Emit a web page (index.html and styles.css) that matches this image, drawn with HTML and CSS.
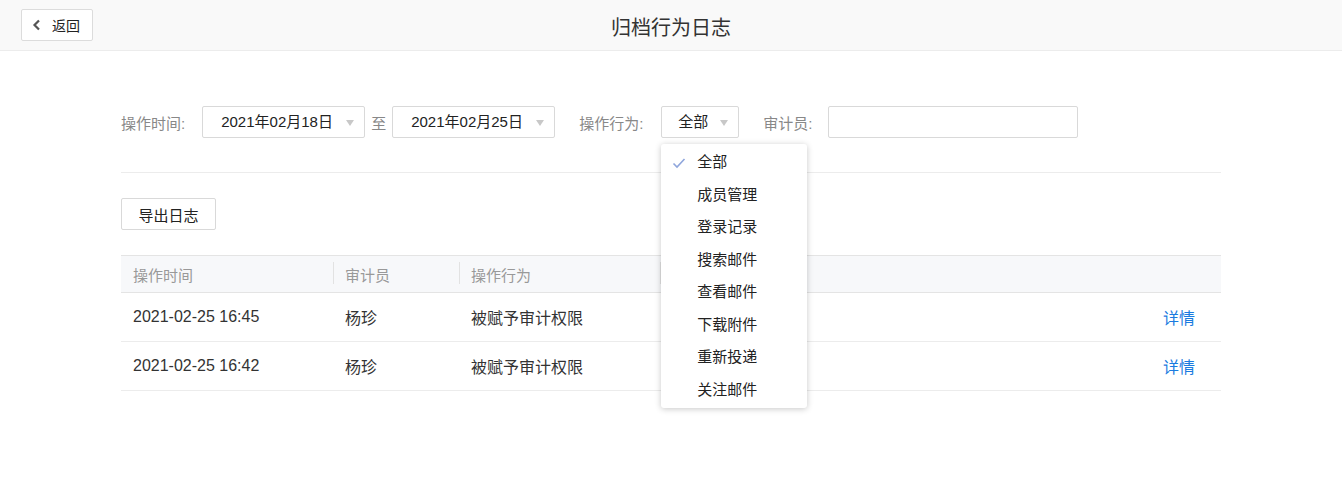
FILE: index.html
```html
<!DOCTYPE html>
<html lang="zh-CN">
<head>
    <meta charset="UTF-8">
    <title>归档行为日志</title>
    <link rel="stylesheet" href="styles.css">
</head>
<body>

<div class="topbar">
    <button class="back-btn">
        <svg width="10" height="12" viewBox="0 0 10 12"><polyline points="7,1.5 2.5,6 7,10.5" fill="none" stroke="#555" stroke-width="2.2"/></svg>
        <span>返回</span>
    </button>
    <h1 class="page-title">归档行为日志</h1>
</div>

<div class="content">
    <div class="filters">
        <span class="filter-label time-label">操作时间:</span>
        <div class="date-box">2021年02月18日<span class="caret"></span></div>
        <span class="to">至</span>
        <div class="date-box">2021年02月25日<span class="caret"></span></div>

        <span class="filter-label action-label">操作行为:</span>
        <div class="select-wrap">
            <div class="select-box">全部<span class="caret"></span></div>
            <ul class="dropdown">
                <li class="selected">
                    <svg class="check" width="14" height="12" viewBox="0 0 14 12"><polyline points="1.5,6.5 5,10 12.5,2" fill="none" stroke="#8fa6dc" stroke-width="1.6"/></svg>
                    全部
                </li>
                <li>成员管理</li>
                <li>登录记录</li>
                <li>搜索邮件</li>
                <li>查看邮件</li>
                <li>下载附件</li>
                <li>重新投递</li>
                <li>关注邮件</li>
            </ul>
        </div>

        <span class="filter-label auditor-label">审计员:</span>
        <input class="auditor-input" type="text">
    </div>

    <div class="divider"></div>

    <button class="export-btn">导出日志</button>

    <table class="log-table">
        <thead>
            <tr>
                <th class="col-time">操作时间</th>
                <th class="col-user"><span class="sep"></span>审计员</th>
                <th class="col-action"><span class="sep"></span>操作行为</th>
                <th class="col-detail"><span class="sep"></span></th>
                <th class="col-op"></th>
            </tr>
        </thead>
        <tbody>
            <tr>
                <td>2021-02-25 16:45</td>
                <td>杨珍</td>
                <td>被赋予审计权限</td>
                <td></td>
                <td><a class="link" href="#">详情</a></td>
            </tr>
            <tr>
                <td>2021-02-25 16:42</td>
                <td>杨珍</td>
                <td>被赋予审计权限</td>
                <td></td>
                <td><a class="link" href="#">详情</a></td>
            </tr>
        </tbody>
    </table>
</div>

</body>
</html>
```

FILE: styles.css
```css
* {
    margin: 0;
    padding: 0;
    box-sizing: border-box;
}

html,
body {
    min-height: 100vh;
}

body {
    background: #fff;
    font-family: "Liberation Sans", Arial, "Noto Sans CJK SC", sans-serif;
    color: #333;
}

.topbar {
    position: relative;
    height: 51px;
    background: #f9f9f9;
    border-bottom: 1px solid #ececec;
    display: flex;
    align-items: center;
    padding-left: 21px;
}

.back-btn {
    display: flex;
    align-items: center;
    gap: 10px;
    width: 72px;
    height: 32px;
    padding-left: 10px;
    background: #fff;
    border: 1px solid #dcdcdc;
    border-radius: 2px;
    font-family: inherit;
    font-size: 14px;
    color: #222;
}

.page-title {
    position: absolute;
    left: 0;
    right: 0;
    top: 12px;
    text-align: center;
    font-size: 20px;
    font-weight: normal;
    color: #333;
    pointer-events: none;
}

.content {
    width: 1100px;
    margin: 55px auto 0;
}

.filters {
    display: flex;
    align-items: center;
    height: 32px;
    font-size: 15px;
}

.filter-label {
    color: #888;
}

.time-label {
    margin-right: 17px;
}

.action-label {
    margin-left: 24px;
    margin-right: 18px;
}

.auditor-label {
    margin-left: 24px;
    margin-right: 15px;
}

.to {
    color: #888;
    margin: 0 6px 0 6px;
}

.date-box,
.select-box {
    position: relative;
    height: 32px;
    line-height: 30px;
    border: 1px solid #d9d9d9;
    border-radius: 2px;
    background: #fff;
    color: #222;
}

.date-box {
    width: 163px;
    padding-left: 18px;
}

.select-box {
    width: 78px;
    padding-left: 16px;
}

.caret {
    position: absolute;
    right: 10px;
    top: 13px;
    width: 0;
    height: 0;
    border-left: 4px solid transparent;
    border-right: 4px solid transparent;
    border-top: 6px solid #c8c8c8;
}

.select-wrap {
    position: relative;
}

.dropdown {
    position: absolute;
    left: 0;
    top: 38px;
    width: 146px;
    padding: 2px 0;
    list-style: none;
    background: #fff;
    border-radius: 3px;
    box-shadow: 0 1px 6px rgba(0, 0, 0, 0.22);
    z-index: 10;
}

.dropdown li {
    position: relative;
    height: 32.5px;
    line-height: 32.5px;
    padding-left: 36px;
    font-size: 15px;
    color: #222;
}

.dropdown .check {
    position: absolute;
    left: 11px;
    top: 11px;
}

.auditor-input {
    width: 250px;
    height: 32px;
    border: 1px solid #d9d9d9;
    border-radius: 2px;
}

.divider {
    height: 1px;
    background: #ececec;
    margin-top: 34px;
}

.export-btn {
    margin-top: 25px;
    width: 95px;
    height: 32px;
    background: #fff;
    border: 1px solid #d9d9d9;
    border-radius: 2px;
    font-family: inherit;
    font-size: 15px;
    color: #222;
}

.log-table {
    width: 100%;
    margin-top: 25px;
    border-collapse: collapse;
    font-size: 16px;
}

.log-table th {
    position: relative;
    height: 37px;
    padding-left: 12px;
    text-align: left;
    font-weight: normal;
    font-size: 15px;
    color: #999;
    background: #f7f8fa;
    border-top: 1px solid #e4e4e4;
    border-bottom: 1px solid #e4e4e4;
}

.log-table .col-time { width: 212px; }
.log-table .col-user { width: 126px; }
.log-table .col-action { width: 201px; }
.log-table .col-op { width: 70px; }

.sep {
    position: absolute;
    left: 0;
    top: 6px;
    width: 1px;
    height: 22px;
    background: #e2e2e2;
}

.log-table td {
    height: 49px;
    padding-left: 12px;
    color: #333;
    border-bottom: 1px solid #ececec;
}

.link {
    color: #1a7be0;
    text-decoration: none;
}
```
